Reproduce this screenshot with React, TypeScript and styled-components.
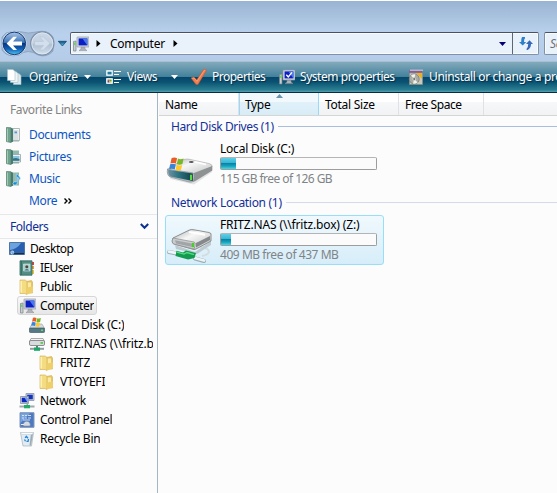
import React from "react";
import styled, { createGlobalStyle, css } from "styled-components";

const GlobalStyle = createGlobalStyle`
  * { box-sizing: border-box; }
  html, body, #root { margin: 0; height: 100%; }
  body { overflow: hidden; background: #fcfcfc; }
`;

const Window = styled.div`
  width: 557px;
  height: 493px;
  display: flex;
  flex-direction: column;
  overflow: hidden;
  border-top: 1px solid #fff;
  background: #fcfcfc;
  color: #000;
  font: 12px/16px "Noto Sans", "Open Sans", sans-serif;
  white-space: nowrap;
  cursor: default;
`;

const Label = styled.span<{ $track?: number }>`
  letter-spacing: ${(p) => p.$track ?? -0.35}px;
`;

const Icon = styled.svg.attrs({ "aria-hidden": true })<{ $w?: number; $h?: number }>`
  display: block;
  flex: none;
  width: ${(p) => p.$w ?? 16}px;
  height: ${(p) => p.$h ?? 16}px;
`;

/* ---------- address bar ---------- */

const AddressRow = styled.header`
  flex: none;
  height: 60px;
  display: flex;
  align-items: flex-start;
  padding-top: 29px;
  background: linear-gradient(#99b4d2 0, #b6cee9 29px, #bad1ed 34px, #b5cce9 60px);
`;

const AddressField = styled.div`
  flex: none;
  width: 469px;
  height: 23px;
  margin: 2px 0 0 1px;
  display: flex;
  align-items: center;
  border: 1px solid #8292a6;
  border-top-color: #49525e;
  border-left-color: #5c6674;
  border-radius: 2px;
  background: #e9f1fb;
  box-shadow: inset 0 0 0 1px #f8fbff;
`;

const Crumb = styled.div`
  flex: 1;
  display: flex;
  align-items: center;
  padding-left: 2px;

  ${Label} { margin: 0 8px 0 9px; }
`;

const RefreshButton = styled.div`
  width: 26px;
  height: 21px;
  display: grid;
  place-items: center;
  border-left: 1px solid #5c6674;
`;

const SearchField = styled.div`
  flex: 1;
  height: 23px;
  margin: 2px 0 0 5px;
  padding: 3px 0 0 5px;
  overflow: hidden;
  border: 1px solid #8292a6;
  border-top-color: #49525e;
  border-right: 0;
  border-radius: 2px 0 0 2px;
  background: #e9f1fb;
  color: #6b6f75;
  font-style: italic;
  box-shadow: inset 1px 1px #f8fbff;
`;

/* ---------- command bar ---------- */

const CommandBar = styled.nav`
  flex: none;
  height: 32px;
  display: flex;
  align-items: center;
  padding: 0 0 0 7px;
  border-top: 1px solid #a9bfd0;
  border-bottom: 1px solid #052d42;
  background: linear-gradient(
    #83aabc 0, #41809a 15px, #05466a 15px, #0a5272 20px, #2b7f92 28px, #5aa0b0 30px
  );
  color: #fff;
`;

const Command = styled.div<{ $width?: number; $gap?: number }>`
  flex: none;
  width: ${(p) => (p.$width ? `${p.$width}px` : "auto")};
  display: flex;
  align-items: center;
  gap: ${(p) => p.$gap ?? 6}px;
  text-shadow: 1px 1px 1px #06304a;
`;

/* ---------- panes ---------- */

const Body = styled.div`
  flex: 1;
  min-height: 0;
  display: flex;
`;

const Sidebar = styled.aside`
  flex: none;
  width: 158px;
  border-right: 1px solid #a5b6c6;
  overflow: hidden;
`;

const Favorites = styled.section`
  height: 122px;
  padding: 9px 0 0 6px;
  border-bottom: 1px solid #e6e8ea;
`;

const FavoritesTitle = styled.div`
  padding-left: 4px;
  margin-bottom: 6px;
  color: #838383;
`;

const FavoriteLink = styled.div`
  height: 22px;
  display: flex;
  align-items: center;
  gap: 8px;
  color: #0b56c4;
`;

const MoreLink = styled(FavoriteLink)`
  padding-left: 23px;
  gap: 7px;
`;

const FoldersHeader = styled.div`
  height: 24px;
  display: flex;
  align-items: center;
  justify-content: space-between;
  padding: 0 8px 0 10px;
  border-bottom: 1px solid #e6e8ea;
  color: #0a2f96;
`;

const TreeRow = styled.div<{ $indent: number }>`
  height: 19px;
  padding-left: ${(p) => p.$indent}px;
  padding-right: 1px;
  display: flex;
`;

const TreeItem = styled.div<{ $selected?: boolean; $gap?: number }>`
  height: 19px;
  min-width: 0;
  display: flex;
  align-items: center;
  gap: ${(p) => p.$gap ?? 5}px;
  padding: 0 2px;
  overflow: hidden;
  border: 1px solid transparent;

  ${Label} { overflow: hidden; }
  ${(p) =>
    p.$selected &&
    css`
      border-color: #d6d6d6;
      border-radius: 3px;
      background: linear-gradient(#f9f9f9, #e6e6e6);
    `}
`;

const Main = styled.main`
  flex: 1;
  min-width: 0;
`;

const ColumnHeader = styled.div`
  height: 23px;
  margin: 0 0 1px 1px;
  display: flex;
  border-bottom: 1px solid #d5d5d5;
  background: linear-gradient(#fff 0, #fff 9px, #f7f8fa 9px, #f1f2f4 22px);
`;

const Column = styled.div<{ $width: number; $sorted?: boolean }>`
  position: relative;
  width: ${(p) => p.$width}px;
  height: 22px;
  padding: 4px 0 0 6px;
  border-right: 1px solid #dfe1e4;
  ${(p) =>
    p.$sorted &&
    css`
      padding-left: 5px;
      border-left: 1px solid #96d9f9;
      border-right-color: #96d9f9;
      background: linear-gradient(#f2f9fc 0, #f2f9fc 9px, #e1f1f9 9px, #d8ecf6 22px);
    `}
`;

const SortMark = styled(Icon)`
  position: absolute;
  left: 36px;
  top: 1px;
`;

const GroupHeader = styled.div<{ $line: string }>`
  height: 20px;
  display: flex;
  align-items: center;
  gap: 4px;
  padding-left: 13px;
  color: #12309a;

  &::after {
    content: "";
    flex: 1;
    height: 1px;
    margin-bottom: 2px;
    background: ${(p) => p.$line};
  }
`;

const Drive = styled.div<{ $selected?: boolean }>`
  width: 219px;
  height: 50px;
  margin: 2px 0 4px 7px;
  display: flex;
  gap: 7px;
  border: 1px solid ${(p) => (p.$selected ? "#99def8" : "transparent")};
  border-radius: 3px;
  background: ${(p) => (p.$selected ? "linear-gradient(#f0f9fd, #d6edf9)" : "none")};
`;

const DriveInfo = styled.div`
  flex: 1;
  padding-top: 1px;
  display: flex;
  flex-direction: column;
`;

const Capacity = styled.div`
  width: 157px;
  height: 13px;
  padding: 1px;
  margin: 0 0 1px;
  border: 1px solid #9d9d9d;
  border-top-color: #b5b5b5;
  border-radius: 2px;
  background: #fbfbfb;
`;

const CapacityFill = styled.div<{ $width: number }>`
  width: ${(p) => p.$width}px;
  height: 11px;
  margin: -1px;
  background: linear-gradient(#5fcfe7 0, #35b4d3 5px, #087ea0 5px, #16a1bd 8px, #48d7e5 11px);
`;

const FreeSpace = styled.div`
  color: #7f8487;
`;

/* ---------- icons ---------- */

const NavButtons = () => (
  <Icon $w={69} $h={28} viewBox="0 0 69 28">
    <defs>
      <linearGradient id="back" x1="0" y1="0" x2="0" y2="1">
        <stop offset="0" stopColor="#a8c6e8" />
        <stop offset=".46" stopColor="#3c74b8" />
        <stop offset=".5" stopColor="#07367f" />
        <stop offset=".75" stopColor="#1261b8" />
        <stop offset="1" stopColor="#4ec7f2" />
      </linearGradient>
      <linearGradient id="fwd" x1="0" y1="0" x2="0" y2="1">
        <stop offset="0" stopColor="#cbd9e8" />
        <stop offset=".5" stopColor="#c3d0df" />
        <stop offset=".52" stopColor="#aebfd1" />
        <stop offset="1" stopColor="#d3e1ef" />
      </linearGradient>
      <linearGradient id="drop" x1="0" y1="0" x2="0" y2="1">
        <stop offset="0" stopColor="#0d4c79" />
        <stop offset="1" stopColor="#58c7ef" />
      </linearGradient>
    </defs>
    <path d="M6 3Q14 0 22 2Q28 4 36 2Q48 -1 53 7V21Q47 28 38 25Q28 18 19 25Q7 28 2 20V7Z" fill="#a2bad5" stroke="#8199b5" strokeWidth=".7" />
    <circle cx="14.3" cy="13.4" r="12.2" fill="#dce8f5" />
    <circle cx="14.3" cy="13.4" r="11.3" fill="url(#back)" stroke="#173a71" strokeWidth="1" />
    <path d="M6.6 13.4L13.3 6.8H17L13 11.4H22V15.4H13L17 20H13.3Z" fill="#fff" />
    <circle cx="42.3" cy="13.4" r="11.6" fill="url(#fwd)" stroke="#7e91a9" strokeWidth="1.3" />
    <circle cx="42.3" cy="13.4" r="10.5" fill="none" stroke="#e1eaf4" strokeWidth=".8" />
    <path d="M50 13.4L43.3 6.8H39.6L43.6 11.4H34.6V15.4H43.6L39.6 20H43.3Z" fill="#d3dfec" stroke="#b3c3d5" strokeWidth=".5" />
    <path d="M58.3 11.3H66.5L62.4 16Z" fill="url(#drop)" stroke="#164e77" strokeWidth=".8" />
  </Icon>
);

const ComputerIcon = ({ check }: { check?: boolean }) => (
  <Icon viewBox="0 0 16 16">
    <path d="M.5 5.5L3 5V15H.5Z" fill="#c9ced1" stroke="#78828a" strokeWidth=".7" />
    <path d="M1.3 6.5H2.3V9H1.3Z" fill="#39e226" />
    <rect x="4" y="1" width="12" height="10" rx=".5" fill="#d3d6dd" stroke="#9298a5" strokeWidth=".7" />
    <path d="M5.6 2.4H14.4V9.4H5.6Z" fill="#0a20c4" />
    <path d="M9.4 2.4H14.4V9.4Z" fill="#4b79ec" />
    <path d="M8 11.3H12V13L14 14.6H6L8 13Z" fill="#aeb2b8" stroke="#848990" strokeWidth=".5" />
    {check && <path d="M7.3 5.7L9.3 8L13 3.4" fill="none" stroke="#fff" strokeWidth="1.4" />}
  </Icon>
);

const ArrowRight = () => (
  <Icon $w={5} $h={7} viewBox="0 0 5 7"><path d="M.5 0L4.5 3.5L.5 7Z" fill="#000" /></Icon>
);

const ArrowDown = ({ color }: { color: string }) => (
  <Icon $w={7} $h={4} viewBox="0 0 7 4"><path d="M0 0H7L3.5 4Z" fill={color} /></Icon>
);

const RefreshIcon = () => (
  <Icon $w={14} $h={13} viewBox="0 0 14 13">
    <path d="M3 0H6V1.3Q5 2 5 5H7.2L3.7 8.6L0 5H2.2Q2 2 3 0Z" fill="#2c7fc9" />
    <path d="M10.5 3.3L14 7H12Q12 11 8.5 13H7.6V11.8Q9.3 10 9.2 7H7Z" fill="#3469b8" />
  </Icon>
);

const OrganizeIcon = () => (
  <Icon viewBox="0 0 16 16">
    <g stroke="#a9c0ca" strokeWidth=".6">
      <path d="M6.5 4.5H12L14 6.5V15.5H6.5Z" fill="#dce9ee" />
      <path d="M3.5 2.5H9L11 4.5V13.5H3.5Z" fill="#edf4f6" />
      <path d="M.5 .5H6L8 2.5V11.5H.5Z" fill="#fff" />
    </g>
  </Icon>
);

const ViewsIcon = () => (
  <Icon viewBox="0 0 16 16">
    <path d="M.5 1.5H6.5V6.5H.5ZM.5 9.5H6.5V14.5H.5Z" fill="#fff" stroke="#d9e8ed" />
    <path d="M1.5 2.7H5.6V5.5H1.5Z" fill="#227ba0" />
    <path d="M1.5 10.5H3.5V12H1.5Z" fill="#df4a2b" />
    <path d="M3.5 10.5H5.6V12H3.5Z" fill="#42ae37" />
    <path d="M1.5 12H3.5V13.6H1.5Z" fill="#2f57cb" />
    <path d="M3.5 12H5.6V13.6H3.5Z" fill="#eab72c" />
    <path d="M8 2.5H15M8 5.5H13M8 10.5H15M8 13.5H13" stroke="#fff" />
  </Icon>
);

const CheckIcon = () => (
  <Icon viewBox="0 0 16 16">
    <path d="M0 9L3 8L5.7 11L13 0L15.8 .8L7 15.5H5Z" fill="#f07c4c" stroke="#c95631" strokeWidth=".5" />
    <path d="M1.5 9.3L3 9L6 12.4L13.7 1" fill="none" stroke="#ffab80" strokeWidth=".7" />
  </Icon>
);

const UninstallIcon = () => (
  <Icon viewBox="0 0 16 16">
    <path d="M1 1.5H14V4H1Z" fill="#8a5a9a" />
    <path d="M2 .5H15V2H2Z" fill="#b9b6c9" />
    <path d="M1.5 4H14.5V15.5H1.5Z" fill="#c9c8bf" stroke="#8c8c83" strokeWidth=".7" />
    <path d="M8 4H14V10Z" fill="#ecb126" />
    <circle cx="6.2" cy="10" r="5" fill="#a9ada5" stroke="#71766e" strokeWidth=".7" />
    <path d="M6.2 10L3 6.4Q5 5 7.4 5.3ZM6.2 10L9.6 13.5Q7 15 5 14.6Z" fill="#f2f5ea" />
    <circle cx="6.2" cy="10" r="1.4" fill="#5d665f" stroke="#eee" strokeWidth=".6" />
  </Icon>
);

const BinderIcon = ({ kind }: { kind: "documents" | "pictures" | "music" }) => (
  <Icon $w={15} viewBox="0 0 15 16">
    <path d="M6 1.5H13V14.5H6Z" fill="#91b9ac" />
    {kind === "documents" && (
      <>
        <path d="M7 1.5H13.5V13.5H7Z" fill="#fafcfb" stroke="#a2aaab" strokeWidth=".8" />
        <path d="M8 4H12.5M8 6H12.5M8 8H12.5M8 10H12.5M8 12H12.5" stroke="#a0adb5" strokeWidth=".7" />
        <path d="M8.5 4.5H11V6.3H8.5Z" fill="#4e9ad1" />
      </>
    )}
    {kind === "pictures" && (
      <>
        <path d="M6 5.5H14.5V13H6Z" fill="#fff" stroke="#929fa8" strokeWidth=".8" />
        <path d="M7 6.8H13.5V11.8H7Z" fill="#8ac3df" />
        <path d="M7 9.6L10 9L13.5 10V11.8H7Z" fill="#337381" />
      </>
    )}
    <path d="M.5 .5L5 .8V15.5L.5 14.6Z" fill="#70a38c" stroke="#4d7c6a" strokeWidth=".7" />
    <path d="M5 .8L7 1.8V14.8L5 15.5Z" fill="#477c72" />
    <path d="M1.5 1.5V14.4" stroke="#a5c8b6" />
    {kind === "music" && (
      <path d="M10.3 3.2V11Q7.5 10 6.9 12.3Q7 14.5 9.3 14Q11.5 13.5 11.4 11V6Q13.8 7 13.4 9.8Q15.5 7.2 13 5.3L11.4 3.2Z" fill="#148dd9" stroke="#e6f3fb" strokeWidth=".5" />
    )}
  </Icon>
);

const DesktopIcon = () => (
  <Icon viewBox="0 0 16 16">
    <path d="M.5 1.5H15.5V13.5H.5Z" fill="#295faf" stroke="#4d76a4" />
    <path d="M1 2H12Q8 8 1 9Z" fill="#6ca3df" />
    <path d="M4 12H15V13.2H4Z" fill="#1e2d43" />
    <circle cx="3.3" cy="11.5" r="1.9" fill="#a9d6f1" />
    <path d="M2.3 10.5H3.4V11.6H2.3Z" fill="#f15b2c" />
    <path d="M3.4 11.6H4.5V12.7H3.4Z" fill="#1d78d6" />
  </Icon>
);

const UserIcon = () => (
  <Icon viewBox="0 0 16 16">
    <path d="M13 2H15V5H13Z" fill="#d5433b" />
    <path d="M13 6H15V9H13Z" fill="#e8a033" />
    <path d="M13 10H15V14H13Z" fill="#e5c24b" />
    <path d="M1 .8H13V15.2H1Z" fill="#528f82" stroke="#31675f" strokeWidth=".8" />
    <path d="M2.5 1V15" stroke="#397268" />
    <path d="M4.5 4H11V11H4.5Z" fill="#a9d0cd" stroke="#d9ebe5" strokeWidth=".6" />
    <circle cx="7.8" cy="6.7" r="1.5" fill="#53443a" />
    <path d="M5.3 10.5Q7.8 7.5 10.3 10.5Z" fill="#386d91" />
  </Icon>
);

const FolderIcon = () => (
  <Icon viewBox="0 0 16 16">
    <path d="M7 2.5L12.5 1.5L13.5 3V14H7Z" fill="#e7c75c" stroke="#c7a346" strokeWidth=".5" />
    <path d="M8.5 3.5H12V9H8.5Z" fill="#fbe9a8" />
    <path d="M1 1H6.2L8 2.5V15.5L6 14.5H1Z" fill="#f4dc82" stroke="#d2ac49" strokeWidth=".6" />
    <path d="M2.2 2V13.5" stroke="#fff2b8" strokeWidth="1.4" />
    <path d="M10 8L14 7.5V13.5L8 15.5V9Z" fill="#efcf69" />
  </Icon>
);

const Flag = () => (
  <>
    <path d="M2 .8Q4.8 -.4 7 1L6 6.3Q3.5 5 .8 6.2Z" fill="#e95b27" />
    <path d="M7.8 1.3Q10.2 2.5 13 1.2L12 6.7Q9 8 6.8 6.6Z" fill="#77b82b" />
    <path d="M.6 7Q3.4 6 5.8 7.2L4.8 12.3Q2.4 11-.4 12Z" fill="#3685da" />
    <path d="M6.6 7.5Q9.2 8.8 11.8 7.6L10.6 12.8Q8 14 5.6 12.7Z" fill="#ffc92d" />
  </>
);

const DiskIcon = () => (
  <Icon viewBox="0 0 16 16">
    <path d="M3 7H13L15.7 11.5H.3Z" fill="#d5dadb" stroke="#89979d" strokeWidth=".5" />
    <rect x=".4" y="11" width="15.2" height="4.5" rx="1" fill="#557987" stroke="#344e5a" strokeWidth=".6" />
    <path d="M12 12.5H14V14H12Z" fill="#61df51" />
    <g transform="translate(2.5 .2) scale(.72)"><Flag /></g>
  </Icon>
);

const NetDriveIcon = () => (
  <Icon viewBox="0 0 16 16">
    <path d="M2 2.5H14L15.5 5.5H.5Z" fill="#f3f3f3" stroke="#8a8a8a" strokeWidth=".7" />
    <rect x=".5" y="4.5" width="15" height="5" rx="1.3" fill="#d9dcdc" stroke="#666" strokeWidth=".7" />
    <path d="M11.5 6.2H14V7.7H11.5Z" fill="#38ca31" />
    <path d="M7 10H9V12H7Z" fill="#64777b" />
    <path d="M1 12.8H15" stroke="#909e9e" strokeWidth="2" />
    <path d="M5 11.5H11V14.8H5Z" fill="#19a966" />
  </Icon>
);

const NetworkIcon = () => (
  <Icon viewBox="0 0 16 16">
    <path d="M7 .5H15V7.5H7Z" fill="#cdd4df" stroke="#8792a7" strokeWidth=".8" />
    <path d="M8.2 1.7H13.8V6.3H8.2Z" fill="#1534bd" />
    <path d="M1.5 3.5H9.5V10.5H1.5Z" fill="#d8dde6" stroke="#8590a3" strokeWidth=".8" />
    <path d="M2.7 4.7H8.3V9.3H2.7Z" fill="#0d27bc" />
    <path d="M5.5 4.7H8.3V9.3Z" fill="#6e98f2" />
    <path d="M7.5 9H9V12H7.5Z" fill="#9ba8af" />
    <path d="M.5 13.5H15.5" stroke="#9daaae" strokeWidth="2" />
    <path d="M5 12H11V15.3H5Z" fill="#21ad68" />
  </Icon>
);

const ControlPanelIcon = () => (
  <Icon viewBox="0 0 16 16">
    <path d="M1 .7H15V15.3H1Z" fill="#4d79c2" stroke="#8398b7" />
    <path d="M1.5 1.2H11L1.5 11Z" fill="#79a5df" />
    <path d="M3 3.5H5M6 3.5H8M9 3.5H12M3 6H5M6 6H8M9 6H12M4 8H11" stroke="#dce8f8" strokeWidth=".9" />
    <path d="M4.5 14A3.5 3.5 0 1 1 11 14Z" fill="#d4dbe2" stroke="#7c8ea6" strokeWidth=".6" />
    <path d="M2 12.5H5" stroke="#e8edf4" />
  </Icon>
);

const BinIcon = () => (
  <Icon viewBox="0 0 16 16">
    <path d="M1.5 1.5L14.5 1.5L12.5 15H4Z" fill="#e1ebf1" stroke="#a5b2bc" strokeWidth=".7" />
    <path d="M12 2.5H14L12 14.5H10.5Z" fill="#9cabb5" />
    <path d="M1.3 1.5H14.7L13 3.5H3Z" fill="#f8fbfc" stroke="#bcc7ce" strokeWidth=".5" />
    <path d="M6.1 7L7.3 5.3L9 7.2M9.5 8L9.1 10.3H7.5M6.5 10.3L5.5 8.5" fill="none" stroke="#2384dc" strokeWidth="1.3" />
  </Icon>
);

const DriveDefs = () => (
  <defs>
    <linearGradient id="driveTop" x1="0" y1="0" x2="1" y2="1">
      <stop offset="0" stopColor="#a5a9aa" /><stop offset=".4" stopColor="#f7f7f7" /><stop offset="1" stopColor="#bbbebf" />
    </linearGradient>
    <linearGradient id="driveFront" x1="0" y1="0" x2="1" y2="0">
      <stop offset="0" stopColor="#6f909f" /><stop offset=".4" stopColor="#2d7585" /><stop offset="1" stopColor="#123f47" />
    </linearGradient>
  </defs>
);

const LargeDisk = () => (
  <Icon $w={47} $h={48} viewBox="0 0 47 48">
    <DriveDefs />
    <path d="M4 39L28 44.5L46 32V28L8 34Z" fill="#e2e2e2" />
    <path d="M1.5 29L17 19.8Q19 19 22 19L43 23.5Q47 24.5 46 27L28 35L1.5 30Z" fill="url(#driveTop)" stroke="#999" strokeWidth=".5" />
    <path d="M28 33L46.3 26V30.5L29 41.3L26 42Z" fill="#8e9293" />
    <path d="M1.5 29L26.5 32.8Q29 33.5 28.5 36.5L27.5 41.3Q26 42.5 23 42L4 37Q.5 35 1.5 29Z" fill="#b2babd" stroke="#7f888c" strokeWidth=".6" />
    <path d="M2.2 29.8L26.8 33.5V41L4.5 36.6Q2 35 2.2 29.8Z" fill="url(#driveFront)" />
    <path d="M25 34.8V40" stroke="#5ff03d" strokeWidth="1.8" />
    <ellipse cx="25.3" cy="22" rx="2.4" ry=".9" fill="#555" />
    <path d="M29 22L40 24.5" stroke="#fff" strokeWidth="1.3" />
    <g transform="translate(3.5 17.3) scale(1.08 1)"><Flag /></g>
  </Icon>
);

const LargeNetDrive = () => (
  <Icon $w={47} $h={48} viewBox="0 0 47 48">
    <path d="M34 31Q43 32 43 36Q42 39 36 40" fill="none" stroke="#d3dde0" strokeWidth="2" />
    <path d="M9 29L29 36L45 25V29L31 38L10 33Z" fill="#bdcbd0" />
    <path d="M7 22L23 14.2Q25 13 28 13.8L43 16.5Q46 17 45 20V25L30 33Q28 34 26 33L8 28Q5 27 7 22Z" fill="url(#driveTop)" stroke="#777" strokeWidth=".8" />
    <path d="M7 22L28 26Q30 26 29 30L28 33L8 28Q5 27 7 22Z" fill="#cacdcf" stroke="#8b8b8b" strokeWidth=".7" />
    <path d="M9 24.2L26 27.5V31L10 27.4Z" fill="#a2a5a8" />
    <path d="M27 27V31.2" stroke="#42d320" strokeWidth="2.2" />
    <path d="M30 27L44 20V24L30 31.5Z" fill="#85898c" />
    <path d="M23 16L39 18.7" stroke="#fff" strokeWidth="2" />
    <path d="M3 36L13 38M29 42.5L38 45" stroke="#9aafb6" strokeWidth="4" strokeLinecap="round" />
    <path d="M3 35.6L13 37.6M29 42L38 44.5" stroke="#edf5f6" strokeWidth="2.8" strokeLinecap="round" />
    <path d="M10.5 34.8L17 36.5L20 34.5L30 37L28.5 42L22 43.5L9.5 40Z" fill="#139b50" />
    <path d="M11 36L18 38L21 36.5L28 38.5" fill="none" stroke="#55dc82" strokeWidth="1.3" />
  </Icon>
);

/* ---------- data ---------- */

type TreeNode = {
  name: string;
  indent: number;
  icon: React.ReactNode;
  selected?: boolean;
  track?: number;
  gap?: number;
};

const tree: TreeNode[] = [
  { name: "Desktop", indent: 6, icon: <DesktopIcon />, track: -0.45 },
  { name: "IEUser", indent: 16, icon: <UserIcon />, track: -0.6 },
  { name: "Public", indent: 16, icon: <FolderIcon /> },
  { name: "Computer", indent: 17, icon: <ComputerIcon />, selected: true, gap: 4 },
  { name: "Local Disk (C:)", indent: 26, icon: <DiskIcon />, track: -0.2 },
  { name: "FRITZ.NAS (\\\\fritz.box) (Z:)", indent: 26, icon: <NetDriveIcon />, track: -0.12 },
  { name: "FRITZ", indent: 36, icon: <FolderIcon />, track: -0.25 },
  { name: "VTOYEFI", indent: 36, icon: <FolderIcon />, track: -0.2 },
  { name: "Network", indent: 16, icon: <NetworkIcon /> },
  { name: "Control Panel", indent: 16, icon: <ControlPanelIcon />, track: -0.28 },
  { name: "Recycle Bin", indent: 16, icon: <BinIcon />, track: -0.25 },
];

const App = () => (
  <>
    <GlobalStyle />
    <Window>
      <AddressRow>
        <NavButtons />
        <AddressField>
          <Crumb>
            <ComputerIcon />
            <Icon $w={7} $h={1} />
            <ArrowRight />
            <Label $track={-0.25}>Computer</Label>
            <ArrowRight />
          </Crumb>
          <Icon $w={14} $h={4} viewBox="0 0 14 4"><path d="M1 0H8L4.5 4Z" fill="#000070" /></Icon>
          <RefreshButton><RefreshIcon /></RefreshButton>
        </AddressField>
        <SearchField><Label>Search</Label></SearchField>
      </AddressRow>

      <CommandBar>
        <Command $width={99}>
          <OrganizeIcon /><Label $track={-0.3}>Organize</Label><ArrowDown color="#fff" />
        </Command>
        <Command $width={85} $gap={5}>
          <ViewsIcon /><Label>Views</Label><Icon $w={4} $h={1} /><ArrowDown color="#fff" />
        </Command>
        <Command $width={88} $gap={5}><CheckIcon /><Label $track={-0.5}>Properties</Label></Command>
        <Command $width={129} $gap={5}><ComputerIcon check /><Label $track={-0.45}>System properties</Label></Command>
        <Command $gap={5}><UninstallIcon /><Label>Uninstall or change a program</Label></Command>
      </CommandBar>

      <Body>
        <Sidebar>
          <Favorites>
            <FavoritesTitle><Label $track={-0.4}>Favorite Links</Label></FavoritesTitle>
            <div>
              <FavoriteLink><BinderIcon kind="documents" /><Label>Documents</Label></FavoriteLink>
              <FavoriteLink><BinderIcon kind="pictures" /><Label>Pictures</Label></FavoriteLink>
              <FavoriteLink><BinderIcon kind="music" /><Label>Music</Label></FavoriteLink>
              <MoreLink>
                <Label>More</Label>
                <Icon $w={8} $h={6} viewBox="0 0 8 6">
                  <path d="M.5 .5L3 3L.5 5.5M4.5 .5L7 3L4.5 5.5" fill="none" stroke="#000" strokeWidth="1.4" />
                </Icon>
              </MoreLink>
            </div>
          </Favorites>
          <FoldersHeader>
            <Label $track={-0.45}>Folders</Label>
            <Icon $w={9} $h={7} viewBox="0 0 9 7"><path d="M.8 1L4.5 4.8L8.2 1" fill="none" stroke="#0a3292" strokeWidth="2" /></Icon>
          </FoldersHeader>
          {tree.map((node) => (
            <TreeRow key={node.name} $indent={node.indent}>
              <TreeItem $selected={node.selected} $gap={node.gap}>
                {node.icon}
                <Label $track={node.track}>{node.name}</Label>
              </TreeItem>
            </TreeRow>
          ))}
        </Sidebar>

        <Main>
          <ColumnHeader>
            <Column $width={80}><Label>Name</Label></Column>
            <Column $width={80} $sorted>
              <Label>Type</Label>
              <SortMark $w={7} $h={4} viewBox="0 0 7 4"><path d="M0 4H7L3.5 0Z" fill="#6795ad" /></SortMark>
            </Column>
            <Column $width={80}><Label $track={-0.27}>Total Size</Label></Column>
            <Column $width={85}><Label $track={-0.42}>Free Space</Label></Column>
          </ColumnHeader>
          <GroupHeader $line="#a9bedf"><Label $track={-0.4}>Hard Disk Drives (1)</Label></GroupHeader>
          <Drive>
            <LargeDisk />
            <DriveInfo>
              <Label $track={-0.22}>Local Disk (C:)</Label>
              <Capacity><CapacityFill $width={15} /></Capacity>
              <FreeSpace><Label $track={-0.55}>115 GB free of 126 GB</Label></FreeSpace>
            </DriveInfo>
          </Drive>
          <GroupHeader $line="#d3dcee"><Label $track={-0.3}>Network Location (1)</Label></GroupHeader>
          <Drive $selected>
            <LargeNetDrive />
            <DriveInfo>
              <Label $track={-0.15}>FRITZ.NAS (\\fritz.box) (Z:)</Label>
              <Capacity><CapacityFill $width={10} /></Capacity>
              <FreeSpace><Label $track={-0.45}>409 MB free of 437 MB</Label></FreeSpace>
            </DriveInfo>
          </Drive>
        </Main>
      </Body>
    </Window>
  </>
);

export default App;
